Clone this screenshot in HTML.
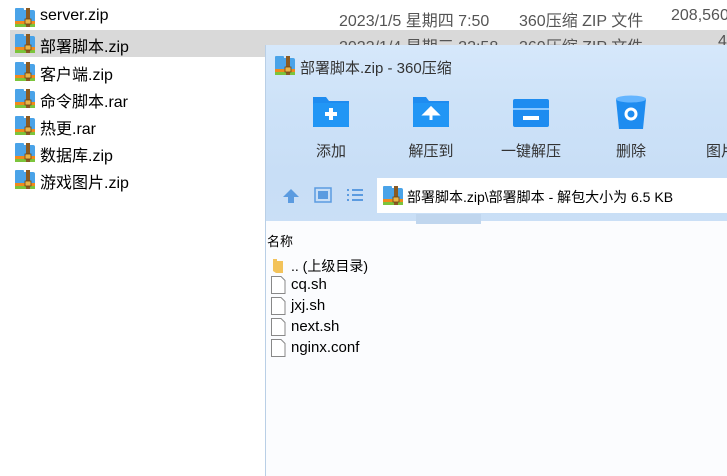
<!DOCTYPE html><html><head><meta charset="utf-8"><style>
body{margin:0;width:727px;height:476px;overflow:hidden;background:#fff;font-family:"Liberation Sans","Microsoft YaHei","Noto Sans CJK SC",sans-serif;position:relative;color:#000}
.a{position:absolute;white-space:nowrap}
.row{position:absolute;left:0;height:27px;width:727px;font-size:16px}
.zi{position:absolute;left:15px;top:4px;width:20px;height:20px}
.nm{position:absolute;left:40px;top:3px}
.g{color:#555;font-size:16px}
.tb{position:absolute;top:0;width:80px;text-align:center;font-size:15px;color:#333}
</style></head><body>
<svg width="0" height="0" style="position:absolute"><defs>
<g id="zip"><rect x="0" y="2" width="20" height="16" rx="2" fill="#4aa3e8"/><rect x="0" y="0" width="9" height="4" rx="1" fill="#4aa3e8"/><rect x="0" y="13" width="20" height="3" fill="#f08a1c"/><rect x="0" y="16" width="20" height="3" fill="#7cc43c"/><rect x="11" y="0" width="4" height="19" fill="#8a5a22"/><rect x="10" y="11" width="6" height="5" fill="#e9b44a" stroke="#6b4414" stroke-width=".8"/></g>
<g id="fil"><path d="M0.5 0.5H10l4 4V17.5H0.5Z" fill="#fff" stroke="#888"/></g>
</defs></svg>
<div class="row" style="top:4px"><svg class="zi" viewBox="0 0 20 20"><use href="#zip"/></svg><span class="nm">server.zip</span></div>
<div class="row" style="top:30px;background:#d9d9d9;left:10px;width:717px"><svg class="zi" style="left:5px" viewBox="0 0 20 20"><use href="#zip"/></svg><span class="nm" style="left:30px">部署脚本.zip</span></div>
<div class="row" style="top:58px"><svg class="zi" viewBox="0 0 20 20"><use href="#zip"/></svg><span class="nm">客户端.zip</span></div>
<div class="row" style="top:85px"><svg class="zi" viewBox="0 0 20 20"><use href="#zip"/></svg><span class="nm">命令脚本.rar</span></div>
<div class="row" style="top:112px"><svg class="zi" viewBox="0 0 20 20"><use href="#zip"/></svg><span class="nm">热更.rar</span></div>
<div class="row" style="top:139px"><svg class="zi" viewBox="0 0 20 20"><use href="#zip"/></svg><span class="nm">数据库.zip</span></div>
<div class="row" style="top:166px"><svg class="zi" viewBox="0 0 20 20"><use href="#zip"/></svg><span class="nm">游戏图片.zip</span></div>
<div class="a g" style="left:339px;top:7px">2023/1/5 星期四 7:50</div>
<div class="a g" style="left:519px;top:7px">360压缩 ZIP 文件</div>
<div class="a g" style="left:671px;top:7px">208,560</div>
<div class="a g" style="left:339px;top:33px">2023/1/4 星期三 22:58</div>
<div class="a g" style="left:519px;top:33px">360压缩 ZIP 文件</div>
<div class="a g" style="left:718px;top:33px">4</div>
<div class="a" style="left:265px;top:45px;width:462px;height:431px;background:linear-gradient(#d6e8fb,#cde2f8 60px,#c8def6 130px,#d2e5f9);border-left:1px solid #b9cfe6">
 <svg class="a" style="left:9px;top:11px" width="20" height="20" viewBox="0 0 20 20"><use href="#zip"/></svg>
 <div class="a" style="left:34px;top:12px;font-size:15px;color:#333">部署脚本.zip - 360压缩</div>
 <div class="tb" style="left:25px;top:50px"><svg width="40" height="34" viewBox="0 0 40 34"><path d="M2 2h13l3 4h20v26H2Z" fill="#1e8cf0"/><rect x="2" y="8" width="36" height="24" rx="2" fill="#2196f5"/><path d="M20 13v12M14 19h12" stroke="#fff" stroke-width="4"/></svg><div style="margin-top:7px">添加</div></div>
 <div class="tb" style="left:125px;top:50px"><svg width="40" height="34" viewBox="0 0 40 34"><path d="M2 2h13l3 4h20v26H2Z" fill="#1e8cf0"/><rect x="2" y="8" width="36" height="24" rx="2" fill="#2196f5"/><path d="M20 25v-8M14 19l6-6 6 6Z" stroke="#fff" stroke-width="3" fill="#fff"/></svg><div style="margin-top:7px">解压到</div></div>
 <div class="tb" style="left:225px;top:50px"><svg width="40" height="34" viewBox="0 0 40 34"><rect x="2" y="4" width="36" height="28" rx="2" fill="#1e8cf0"/><path d="M2 14h36" stroke="#8cc8ff" stroke-width="2"/><path d="M12 23h16" stroke="#fff" stroke-width="4"/></svg><div style="margin-top:7px">一键解压</div></div>
 <div class="tb" style="left:325px;top:50px"><svg width="40" height="36" viewBox="0 0 40 36"><path d="M5 4h30l-3 30H8Z" fill="#1e8cf0"/><ellipse cx="20" cy="4" rx="15" ry="3.5" fill="#64b5ff"/><circle cx="20" cy="19" r="5" fill="none" stroke="#fff" stroke-width="3"/></svg><div style="margin-top:5px">删除</div></div>
 <div class="tb" style="left:415px;top:50px"><svg width="40" height="34" viewBox="0 0 40 34"><rect x="27" y="2" width="30" height="32" fill="#1e8cf0"/></svg><div style="margin-top:7px">图片</div></div>
 <svg class="a" style="left:16px;top:143px" width="18" height="16" viewBox="0 0 18 16"><path d="M9 1L1 9h5v6h6V9h5Z" fill="#5b9be0"/></svg>
 <svg class="a" style="left:48px;top:142px" width="18" height="16" viewBox="0 0 18 16"><rect x="1" y="1" width="16" height="14" fill="none" stroke="#5b9be0" stroke-width="1.5"/><rect x="4" y="4" width="10" height="8" fill="#5b9be0"/></svg>
 <svg class="a" style="left:80px;top:143px" width="18" height="14" viewBox="0 0 18 14"><path d="M1 2h2M6 2h11M1 7h2M6 7h11M1 12h2M6 12h11" stroke="#5b9be0" stroke-width="2"/></svg>
 <div class="a" style="left:111px;top:133px;width:351px;height:35px;background:#fff"></div>
 <svg class="a" style="left:117px;top:141px" width="20" height="20" viewBox="0 0 20 20"><use href="#zip"/></svg>
 <div class="a" style="left:141px;top:142px;font-size:14px">部署脚本.zip\部署脚本 - 解包大小为 6.5 KB</div>
 <div class="a" style="left:0;top:176px;width:462px;height:255px;background:#fbfcfe"></div>
 <div class="a" style="left:150px;top:169px;width:65px;height:10px;background:#c0d6ee"></div>
 <div class="a" style="left:1px;top:186px;font-size:13px">名称</div>
 <svg class="a" style="left:7px;top:211px" width="12" height="17" viewBox="0 0 12 17"><path d="M0 3h4v2h6v12H3L0 15Z" fill="#f3c35a"/></svg>
 <div class="a" style="left:25px;top:211px;font-size:14px">.. (上级目录)</div>
 <svg class="a" style="left:5px;top:231px" width="15" height="18"><use href="#fil"/></svg><div class="a" style="left:25px;top:231px;font-size:15px">cq.sh</div>
 <svg class="a" style="left:5px;top:252px" width="15" height="18"><use href="#fil"/></svg><div class="a" style="left:25px;top:252px;font-size:15px">jxj.sh</div>
 <svg class="a" style="left:5px;top:273px" width="15" height="18"><use href="#fil"/></svg><div class="a" style="left:25px;top:273px;font-size:15px">next.sh</div>
 <svg class="a" style="left:5px;top:294px" width="15" height="18"><use href="#fil"/></svg><div class="a" style="left:25px;top:294px;font-size:15px">nginx.conf</div>
</div>
</body></html>
